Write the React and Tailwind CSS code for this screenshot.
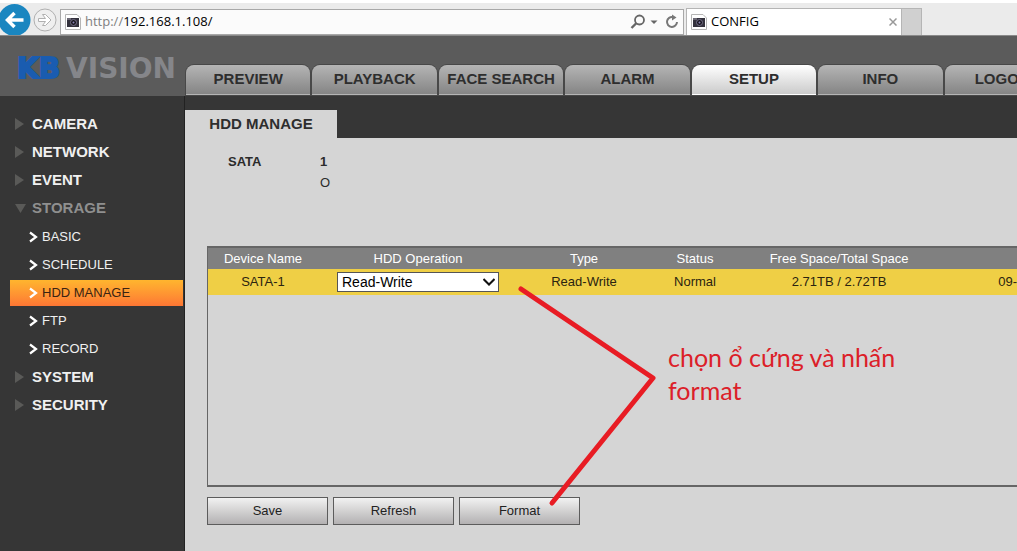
import React, { useState } from "react";

const navTabs = ["PREVIEW", "PLAYBACK", "FACE SEARCH", "ALARM", "SETUP", "INFO", "LOGOUT"];

const menu = [
  { label: "CAMERA" },
  { label: "NETWORK" },
  { label: "EVENT" },
  { label: "STORAGE", children: ["BASIC", "SCHEDULE", "HDD MANAGE", "FTP", "RECORD"] },
  { label: "SYSTEM" },
  { label: "SECURITY" },
];

function CameraIcon() {
  return (
    <svg className="h-4 w-4 shrink-0" viewBox="0 0 16 16">
      <path d="M0.5 0.5H12L15.5 4V15.5H0.5Z" fill="#fff" stroke="#b5b5b5" />
      <rect x="2" y="4" width="12" height="9" fill="#33313c" />
      <rect x="2" y="4" width="4" height="2" fill="#6b6874" />
      <circle cx="8.5" cy="8.5" r="3" fill="#17151d" stroke="#77718c" />
      <circle cx="8.5" cy="8.5" r="1" fill="#8d84b8" />
    </svg>
  );
}

function BrowserBar() {
  return (
    <div className="flex h-9 items-end overflow-hidden border-t-3 border-b border-t-white border-b-[#8a8a8a] bg-[#ebebeb] font-['Open_Sans',sans-serif] text-[13px]">
      <button type="button" aria-label="Back" className="shrink-0">
        <svg className="h-8 w-[31px]" viewBox="0 0 31 32">
          <circle cx="14.5" cy="17" r="16" fill="#1a86c0" />
          <path d="M23.500 17H8M14.500 10L7.500 17L14.500 24" fill="none" stroke="#fff" strokeWidth="3.500" />
        </svg>
      </button>
      <button type="button" aria-label="Forward" className="ml-0.5 shrink-0">
        <svg className="h-8 w-6" viewBox="0 0 24 32">
          <circle cx="12" cy="17" r="11" fill="#efefef" stroke="#b0b0b0" />
          <path
            d="M5.500 15.500H12.500L9.500 11.500H12.500L18 17L12.500 22.500H9.500L12.500 18.500H5.500Z"
            fill="#fff"
            stroke="#b0b0b0"
          />
        </svg>
      </button>
      <div className="ml-[3px] flex h-[26px] min-w-0 flex-1 items-center border border-[#a8a8a8] bg-[#fbfbfb] pr-[3px] pl-1">
        <CameraIcon />
        <label htmlFor="address" className="pl-1 text-[#808080]">
          http://
        </label>
        <input
          id="address"
          type="text"
          defaultValue="192.168.1.108/"
          className="min-w-0 flex-1 bg-transparent text-black outline-none"
        />
        <button type="button" aria-label="Search">
          <svg className="h-4 w-4" viewBox="0 0 16 16" fill="none" stroke="#666">
            <circle cx="9.500" cy="6" r="4.500" strokeWidth="1.800" />
            <path d="M6.500 9L1.500 14" strokeWidth="2.400" />
          </svg>
        </button>
        <button type="button" aria-label="Show address history" className="px-1">
          <svg className="h-4 w-2" viewBox="0 0 8 16">
            <path d="M0.500 6.500H7.500L4 10Z" fill="#666" />
          </svg>
        </button>
        <button type="button" aria-label="Reload" className="ml-0.5">
          <svg className="h-4 w-4" viewBox="0 0 16 16" fill="none" stroke="#777" strokeWidth="2">
            <path d="M9 3A5 5 0 1 0 13 8" />
            <path d="M8 0.500L12.500 3.500L8 6.500Z" fill="#777" stroke="none" />
          </svg>
        </button>
      </div>
      <div className="ml-0.5 flex h-[27px] w-[216px] shrink-0 items-center border border-b-0 border-[#b5b5b5] bg-white pr-1 pl-1">
        <CameraIcon />
        <span className="flex-1 pl-1">CONFIG</span>
        <button type="button" aria-label="Close tab">
          <svg className="h-2 w-2" viewBox="0 0 8 8" stroke="#999" strokeWidth="1.500">
            <path d="M0.500 0.500L7.500 7.500M7.500 0.500L0.500 7.500" />
          </svg>
        </button>
      </div>
      <button
        type="button"
        aria-label="New tab"
        className="mr-[95px] h-[27px] w-5 shrink-0 border border-b-0 border-l-0 border-[#b5b5b5] bg-[#d0d0d0]"
      />
    </div>
  );
}

function Header() {
  return (
    <header className="flex h-[60px] items-end overflow-hidden bg-[#5b5b5b] pb-px">
      <div className="flex h-full w-[186px] shrink-0 items-center gap-1.5 pt-1.5 pl-[17px] font-['DejaVu_Sans',sans-serif] text-[28px] font-bold">
        <span className="text-[#1a5cb0] [-webkit-text-stroke:2px_#1a5cb0]">KB</span>
        <span className="text-[#85868a]">VISION</span>
      </div>
      <nav className="flex w-[883px] shrink-0 gap-0.5">
        {navTabs.map((tab) => (
          <a
            key={tab}
            href="#"
            className={`flex h-[30px] flex-1 basis-0 items-center justify-center rounded-t-lg border-b text-[15px] font-bold whitespace-nowrap text-[#2e2e2e] ring-1 ring-[#484848] ${
              tab === "SETUP"
                ? "border-white bg-linear-to-b from-white to-[#cbcbcb]"
                : "border-[#b5b5b5] bg-linear-to-b from-[#b5b5b5] to-[#858585]"
            }`}
          >
            {tab}
          </a>
        ))}
      </nav>
    </header>
  );
}

function Sidebar({ page, setPage }) {
  return (
    <aside className="w-[185px] shrink-0 border-r border-[#222] pt-3.5 pr-px pl-2.5">
      {menu.map((item) => (
        <div key={item.label}>
          <button
            type="button"
            className={`flex h-7 w-full items-center pl-1 text-[15px] font-bold ${
              item.children ? "text-[#8f8f8f]" : "text-[#f0f0f0]"
            }`}
          >
            <svg className="mr-1.5 h-3 w-3" viewBox="0 0 12 12" fill="#5a5a58">
              {item.children ? <path d="M1 2H12L6.500 11Z" /> : <path d="M1 0V12L10 6Z" />}
            </svg>
            {item.label}
          </button>
          {item.children && (
            <div className="flex flex-col gap-0.5 pt-0.5 pb-px">
              {item.children.map((child) => (
                <button
                  key={child}
                  type="button"
                  onClick={() => setPage(child)}
                  className={`flex h-[26px] w-full items-center pl-[18px] text-[13px] ${
                    child === page
                      ? "bg-linear-to-b from-[#ffb52e] to-[#fd7634] text-[#3a2412]"
                      : "text-[#f0f0f0]"
                  }`}
                >
                  <svg
                    className="mr-[3px] h-3 w-[11px]"
                    viewBox="0 0 11 12"
                    fill="none"
                    stroke="#fff"
                    strokeWidth="2.200"
                  >
                    <path d="M2 1.500L8 6L2 10.500" />
                  </svg>
                  {child}
                </button>
              ))}
            </div>
          )}
        </div>
      ))}
    </aside>
  );
}

function DiskTable() {
  return (
    <div className="relative h-[241px] border-y-2 border-l border-[#666] text-[13px]">
      <table className="w-full table-fixed text-center text-[#2b2410]">
        <thead>
          <tr className="h-[21px] bg-[#808080] text-white">
            <th className="w-[110px] font-normal">Device Name</th>
            <th className="w-[200px] font-normal">HDD Operation</th>
            <th className="w-[132px] font-normal">Type</th>
            <th className="w-[90px] font-normal">Status</th>
            <th className="w-[198px] font-normal">Free Space/Total Space</th>
            <th />
          </tr>
        </thead>
        <tbody>
          <tr className="h-[26px] bg-[#efcf45]">
            <td>SATA-1</td>
            <td>
              <div className="relative mx-auto h-5 w-[162px]">
                <select
                  aria-label="HDD Operation"
                  defaultValue="Read-Write"
                  className="block h-5 w-full appearance-none border border-[#555] bg-white pl-1 text-[14px] leading-4 text-black"
                >
                  <option>Read-Write</option>
                  <option>Read-Only</option>
                  <option>Redundant</option>
                </select>
                <svg
                  className="pointer-events-none absolute top-1 right-1 h-3 w-3"
                  viewBox="0 0 12 12"
                  fill="none"
                  stroke="#111"
                  strokeWidth="2"
                >
                  <path d="M0.500 3L6 8.500L11.500 3" />
                </svg>
              </div>
            </td>
            <td>Read-Write</td>
            <td>Normal</td>
            <td>2.71TB / 2.72TB</td>
            <td className="text-right">09-</td>
          </tr>
        </tbody>
      </table>

      {/* Note on top of the table */}
      <svg
        className="pointer-events-none absolute top-9 left-[306px] h-[230px] w-[150px]"
        viewBox="0 0 150 230"
        fill="none"
        stroke="#e81c24"
        strokeWidth="5"
        strokeLinecap="round"
        strokeLinejoin="round"
      >
        <path d="M7 5L139 94L38 219" />
      </svg>
      <p className="absolute top-[93px] left-[460px] w-[250px] font-['Lato',sans-serif] text-[25px] leading-[33px] text-[#dc2028]">
        chọn ổ cứng và nhấn format
      </p>
    </div>
  );
}

export default function App() {
  const [page, setPage] = useState("HDD MANAGE");

  return (
    <div className="flex min-h-screen flex-col overflow-hidden bg-[#363636] font-['Liberation_Sans',Arial,sans-serif]">
      <BrowserBar />
      <Header />
      <div className="flex flex-1">
        <Sidebar page={page} setPage={setPage} />
        <main className="flex min-w-0 flex-1 flex-col pt-3.5">
          <h1 className="flex h-7 w-[152px] items-center justify-center bg-[#d5d5d5] text-[15px] font-bold text-[#2e2e2e]">
            {page}
          </h1>
          <div className="flex-1 bg-[#d5d5d5] pt-[13px] pl-[22px]">
            <dl className="flex h-[95px] pl-[21px] text-[13px] leading-[21px] text-[#2b2b2b]">
              <dt className="w-[92px] font-bold">SATA</dt>
              <dd>
                <div className="font-bold">1</div>
                <div>O</div>
              </dd>
            </dl>
            <DiskTable />
            <div className="flex gap-[5px] pt-2.5">
              {["Save", "Refresh", "Format"].map((label) => (
                <button
                  key={label}
                  type="button"
                  className="h-7 w-[121px] border border-[#5c5c5c] bg-linear-to-b from-[#f2f2f2] to-[#b3b1b2] text-[13px] text-[#222]"
                >
                  {label}
                </button>
              ))}
            </div>
          </div>
        </main>
      </div>
    </div>
  );
}
